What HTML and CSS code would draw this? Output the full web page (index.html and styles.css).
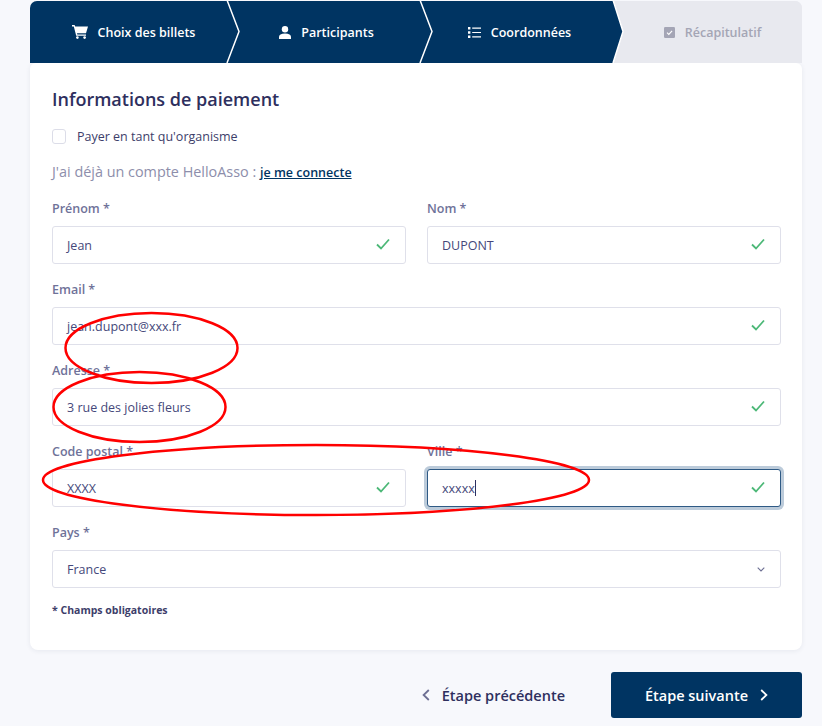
FILE: index.html
```html
<!DOCTYPE html>
<html lang="fr">
<head>
    <meta charset="UTF-8">
    <meta name="viewport" content="width=device-width, initial-scale=1.0">
    <title>Informations de paiement</title>
    <link rel="stylesheet" href="styles.css">
</head>
<body>
    <svg width="0" height="0" class="defs">
        <symbol id="check" viewBox="0 0 14 12"><path d="M1 6.5 L5 10.5 L13 1.5" fill="none" stroke="#4cb877" stroke-width="1.8"/></symbol>
    </svg>
    <div class="page">
        <div class="steps">
            <div class="step">
                <svg class="step-icon" width="16" height="14" viewBox="0 0 16 14"><path d="M0 0h2.6l.6 1.6H16l-2 6.6H5l.3 1.3H14v1.3H4.2L1.8 1.4H0z" fill="#fff"/><circle cx="5.4" cy="12.6" r="1.3" fill="#fff"/><circle cx="12.6" cy="12.6" r="1.3" fill="#fff"/></svg>
                <span>Choix des billets</span>
            </div>
            <div class="step">
                <svg class="sep" width="18" height="63" viewBox="0 0 18 63"><path d="M0 0H4L16 31.5 4 63H0z" fill="#003462"/><path d="M4 0L16 31.5 4 63" fill="none" stroke="#fff" stroke-width="1.5"/></svg>
                <svg class="step-icon" width="12" height="13" viewBox="0 0 12 13"><circle cx="6" cy="3.2" r="3.2" fill="#fff"/><path d="M0 13v-2c0-2.4 2-3.6 6-3.6s6 1.2 6 3.6v2z" fill="#fff"/></svg>
                <span>Participants</span>
            </div>
            <div class="step">
                <svg class="sep" width="18" height="63" viewBox="0 0 18 63"><path d="M0 0H4L16 31.5 4 63H0z" fill="#003462"/><path d="M4 0L16 31.5 4 63" fill="none" stroke="#fff" stroke-width="1.5"/></svg>
                <svg class="step-icon" width="13" height="11" viewBox="0 0 13 11"><path d="M0 0h2.4v2.4H0zM0 4.3h2.4v2.4H0zM0 8.6h2.4V11H0z" fill="#fff"/><path d="M4.2 1.2H13M4.2 5.5H13M4.2 9.8H13" stroke="#fff" stroke-width="1.2"/></svg>
                <span>Coordonnées</span>
            </div>
            <div class="step step-todo">
                <svg class="sep" width="18" height="63" viewBox="0 0 18 63"><path d="M0 0H4L14 31.5 4 63H0z" fill="#003462"/><path d="M4 0L14 31.5 4 63" fill="none" stroke="#fff" stroke-width="1.5"/></svg>
                <svg class="step-icon" width="11" height="11" viewBox="0 0 11 11"><rect width="11" height="11" rx="1.2" fill="#a4a5b5"/><path d="M3 5.6l1.8 1.8 3.3-3.6" fill="none" stroke="#fff" stroke-width="1.1"/></svg>
                <span>Récapitulatif</span>
            </div>
        </div>

        <div class="card">
            <h2>Informations de paiement</h2>
            <div class="org">
                <span class="checkbox"></span>
                <span>Payer en tant qu'organisme</span>
            </div>
            <p class="account">J'ai déjà un compte HelloAsso : <a href="#">je me connecte</a></p>

            <div class="form-grid">
                <div class="form-group">
                    <label>Prénom *</label>
                    <div class="field"><span>Jean</span><svg class="tick"><use href="#check"/></svg></div>
                </div>
                <div class="form-group">
                    <label>Nom *</label>
                    <div class="field"><span>DUPONT</span><svg class="tick"><use href="#check"/></svg></div>
                </div>
                <div class="form-group wide">
                    <label>Email *</label>
                    <div class="field"><span>jean.dupont@xxx.fr</span><svg class="tick"><use href="#check"/></svg></div>
                </div>
                <div class="form-group wide">
                    <label>Adresse *</label>
                    <div class="field"><span>3 rue des jolies fleurs</span><svg class="tick"><use href="#check"/></svg></div>
                </div>
                <div class="form-group">
                    <label>Code postal *</label>
                    <div class="field"><span>XXXX</span><svg class="tick"><use href="#check"/></svg></div>
                </div>
                <div class="form-group">
                    <label>Ville *</label>
                    <div class="field focus"><span>xxxxx</span><i class="caret"></i><svg class="tick"><use href="#check"/></svg></div>
                </div>
                <div class="form-group wide">
                    <label>Pays *</label>
                    <div class="field"><span>France</span><svg class="arrow-down" width="8" height="5" viewBox="0 0 8 5"><path d="M.7.7L4 4 7.3.7" fill="none" stroke="#6d6f93" stroke-width="1.1"/></svg></div>
                </div>
            </div>
            <p class="mandatory">* Champs obligatoires</p>
        </div>

        <div class="actions">
            <a class="btn-prev" href="#">
                <svg width="8" height="12" viewBox="0 0 8 12"><path d="M6.8 1L1.6 6l5.2 5" fill="none" stroke="#6d6f93" stroke-width="1.8"/></svg>
                <span>Étape précédente</span>
            </a>
            <a class="btn-next" href="#">
                <span>Étape suivante</span>
                <svg width="8" height="12" viewBox="0 0 8 12"><path d="M1.2 1l5.2 5-5.2 5" fill="none" stroke="#fff" stroke-width="1.8"/></svg>
            </a>
        </div>
    </div>

    <!-- annotations au stylo rouge -->
    <svg class="marks" width="822" height="726" viewBox="0 0 822 726">
        <ellipse cx="151.5" cy="348" rx="86" ry="35"/>
        <ellipse cx="139.5" cy="407" rx="86" ry="35"/>
        <ellipse cx="316" cy="480" rx="273" ry="35"/>
    </svg>
</body>
</html>
```

FILE: styles.css
```css
/* Page */
body {
    margin: 0;
    background: #f7f8fc;
    font-family: "Open Sans", "Noto Sans", sans-serif;
    color: #2e2f5e;
    overflow: hidden;
}
.defs {
    position: absolute;
}
.page {
    width: 772px;
    height: 725px;
    margin-left: 30px;
    padding-top: 1px;
}

/* Etapes */
.steps {
    display: flex;
    height: 62px;
    background: #e8e9ef;
    border-radius: 7px 7px 0 0;
    overflow: hidden;
}
.step {
    position: relative;
    flex: 0 0 193px;
    box-sizing: border-box;
    padding-left: 14px;
    display: flex;
    align-items: center;
    justify-content: center;
    gap: 10px;
    background: #003462;
    color: #fff;
    font-size: 12.5px;
    font-weight: 600;
}
.step-todo {
    background: #e8e9ef;
    color: #a4a5b5;
}
.step-icon {
    flex: none;
}
.sep {
    position: absolute;
    left: 0;
    top: -1px;
}

/* Carte */
.card {
    box-sizing: border-box;
    height: 587px;
    padding: 25px 21px 0 22px;
    background: #fff;
    border-radius: 6px 6px 8px 8px;
    box-shadow: 0 1px 5px rgba(40, 45, 90, 0.08);
}
h2 {
    margin: 0;
    font-size: 18px;
    line-height: 22px;
    font-weight: 600;
}
.org {
    display: flex;
    align-items: center;
    gap: 11px;
    margin-top: 18px;
    height: 16px;
    font-size: 12.5px;
    color: #3d3e6a;
}
.checkbox {
    box-sizing: border-box;
    width: 14px;
    height: 15px;
    border: 1px solid #dcdde8;
    border-radius: 3px;
}
.account {
    margin: 18px 0 0;
    font-size: 14.4px;
    line-height: 20px;
    color: #8d8eab;
}
.account a {
    color: #003462;
    font-size: 12.5px;
    font-weight: 600;
}

/* Formulaire */
.form-grid {
    display: grid;
    grid-template-columns: 354px 354px;
    column-gap: 21px;
    row-gap: 17px;
    margin-top: 17px;
}
.form-group {
    display: flex;
    flex-direction: column;
    gap: 8px;
}
.wide {
    grid-column: 1 / 3;
}
label {
    font-size: 12.5px;
    line-height: 18px;
    font-weight: 600;
    color: #6f7299;
}
.field {
    box-sizing: border-box;
    height: 38px;
    display: flex;
    align-items: center;
    padding: 0 15px 0 14px;
    background: #fff;
    border: 1px solid #dfe0ea;
    border-radius: 3px;
    font-size: 12.5px;
    color: #45487a;
}
.focus {
    border: 1px solid #2f5a85;
    box-shadow: 0 0 0 3px #bccbda;
}
.caret {
    width: 1px;
    height: 16px;
    background: #2e2f5e;
}
.tick {
    width: 14px;
    height: 12px;
    margin-left: auto;
    margin-bottom: 2px;
}
.arrow-down {
    margin-left: auto;
}
.mandatory {
    margin: 15px 0 0;
    font-size: 10.5px;
    line-height: 14px;
    font-weight: 700;
    color: #3d3e6a;
}

/* Boutons */
.actions {
    display: flex;
    justify-content: flex-end;
    align-items: center;
    gap: 46px;
    margin-top: 22px;
}
.actions a {
    display: flex;
    align-items: center;
    gap: 12px;
    font-size: 14.5px;
    font-weight: 600;
    text-decoration: none;
}
.btn-prev {
    color: #2e2f5e;
}
.btn-next {
    box-sizing: border-box;
    width: 191px;
    height: 46px;
    justify-content: center;
    background: #003462;
    border-radius: 3px;
    color: #fff;
}

/* Annotations */
.marks {
    position: absolute;
    left: 0;
    top: 0;
}
.marks ellipse {
    fill: none;
    stroke: #ff0000;
    stroke-width: 2.5;
}
```
